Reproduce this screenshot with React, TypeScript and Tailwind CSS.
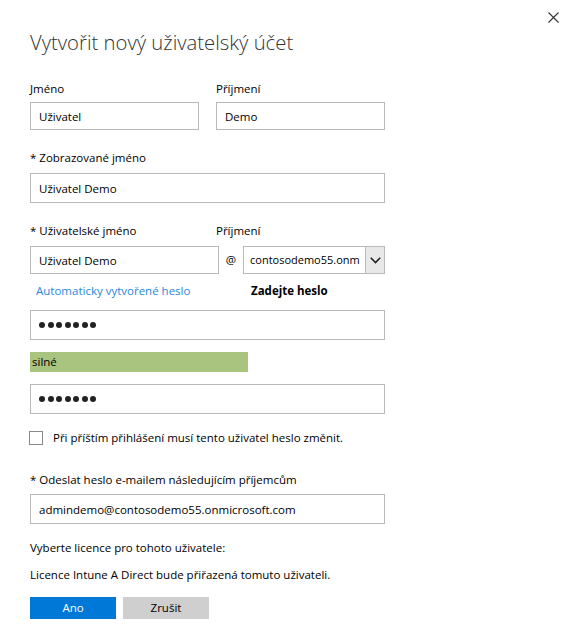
import { useState } from "react";

const inputCls =
  "block border border-[#b9b9b9] bg-white px-2 text-[11.5px] text-black outline-none";

function Dots() {
  return (
    <div className="flex h-full items-center gap-[2.5px] pl-[8px]">
      {[0, 1, 2, 3, 4, 5, 6].map((i) => (
        <span key={i} className="h-[6px] w-[6px] rounded-full bg-[#222]" />
      ))}
    </div>
  );
}

export default function App() {
  const [first, setFirst] = useState("Uživatel");
  const [last, setLast] = useState("Demo");
  const [display, setDisplay] = useState("Uživatel Demo");
  const [user, setUser] = useState("Uživatel Demo");
  const [email, setEmail] = useState("admindemo@contosodemo55.onmicrosoft.com");

  return (
    <div
      className="relative min-h-[631px] w-[577px] bg-white pl-[30px] text-[11.5px] text-black"
      style={{ fontFamily: '"Open Sans", "Noto Sans", sans-serif' }}
    >
      <button className="absolute right-[18px] top-[11px] flex h-[12px] w-[12px] items-center justify-center">
        <svg width="11" height="11" viewBox="0 0 11 11">
          <path d="M0.5 0.5L10.5 10.5M10.5 0.5L0.5 10.5" stroke="#333" strokeWidth="1.1" />
        </svg>
      </button>

      <div className="w-[355px] pt-[27px]">
        <h1 className="text-[20.3px] font-light leading-[30px] text-[#333]">
          Vytvořit nový uživatelský účet
        </h1>

        <div className="mt-[24px] flex gap-[17px]">
          <div className="w-[169px]">
            <div className="h-[16px] leading-[16px]">Jméno</div>
            <input
              value={first}
              onChange={(e) => setFirst(e.target.value)}
              className={inputCls + " mt-[5px] h-[28px] w-full"}
            />
          </div>
          <div className="w-[169px]">
            <div className="h-[16px] leading-[16px]">Příjmení</div>
            <input
              value={last}
              onChange={(e) => setLast(e.target.value)}
              className={inputCls + " mt-[5px] h-[28px] w-full"}
            />
          </div>
        </div>

        <div className="mt-[20px] h-[16px] leading-[16px]">* Zobrazované jméno</div>
        <input
          value={display}
          onChange={(e) => setDisplay(e.target.value)}
          className={inputCls + " mt-[7px] h-[30px] w-full"}
        />

        <div className="mt-[20px] flex">
          <div className="h-[16px] w-[186px] leading-[16px]">* Uživatelské jméno</div>
          <div className="h-[16px] leading-[16px]">Příjmení</div>
        </div>
        <div className="mt-[7px] flex h-[28px] items-center">
          <input
            value={user}
            onChange={(e) => setUser(e.target.value)}
            className={inputCls + " h-[28px] w-[189px] shrink-0"}
          />
          <span className="w-[24px] shrink-0 text-center">@</span>
          <div className="flex h-[28px] min-w-0 flex-1 border border-[#b9b9b9]">
            <div className="flex min-w-0 flex-1 items-center overflow-hidden whitespace-nowrap pl-[6px] text-[11px]">
              contosodemo55.onm
            </div>
            <div className="flex w-[19px] shrink-0 items-center justify-center border-l border-[#b9b9b9] bg-[#e8e8e8]">
              <svg width="11" height="7" viewBox="0 0 11 7">
                <path d="M0.8 0.8L5.5 5.5L10.2 0.8" fill="none" stroke="#222" strokeWidth="1.6" />
              </svg>
            </div>
          </div>
        </div>

        <div className="mt-[9px] flex h-[16px] leading-[16px]">
          <a className="w-[221px] pl-[6px] text-[#2b88d8]">Automaticky vytvořené heslo</a>
          <span className="font-bold">Zadejte heslo</span>
        </div>

        <div className="mt-[11px] h-[30px] w-full border border-[#b9b9b9]">
          <Dots />
        </div>

        <div className="mt-[12px] flex h-[20px] w-[218px] items-center bg-[#a9c47f] pl-[2px]">
          silné
        </div>

        <div className="mt-[12px] h-[30px] w-full border border-[#b9b9b9]">
          <Dots />
        </div>

        <label className="mt-[16px] flex h-[16px] items-center">
          <span className="ml-[-1px] h-[14px] w-[14px] border border-[#8a8a8a] bg-white" />
          <span className="ml-[10px] leading-[16px]">
            Při příštím přihlášení musí tento uživatel heslo změnit.
          </span>
        </label>

        <div className="mt-[26px] h-[16px] leading-[16px]">
          * Odeslat heslo e-mailem následujícím příjemcům
        </div>
        <input
          value={email}
          onChange={(e) => setEmail(e.target.value)}
          className={inputCls + " mt-[6px] h-[30px] w-full"}
        />

        <div className="mt-[16px] h-[16px] leading-[16px]">Vyberte licence pro tohoto uživatele:</div>
        <div className="mt-[11px] h-[16px] leading-[16px]">
          Licence Intune A Direct bude přiřazená tomuto uživateli.
        </div>

        <div className="mt-[14px] flex gap-[7px]">
          <button className="h-[22px] w-[86px] bg-[#0078d7] text-white">Ano</button>
          <button className="h-[22px] w-[86px] bg-[#cfcfcf] text-black">Zrušit</button>
        </div>
      </div>
    </div>
  );
}
